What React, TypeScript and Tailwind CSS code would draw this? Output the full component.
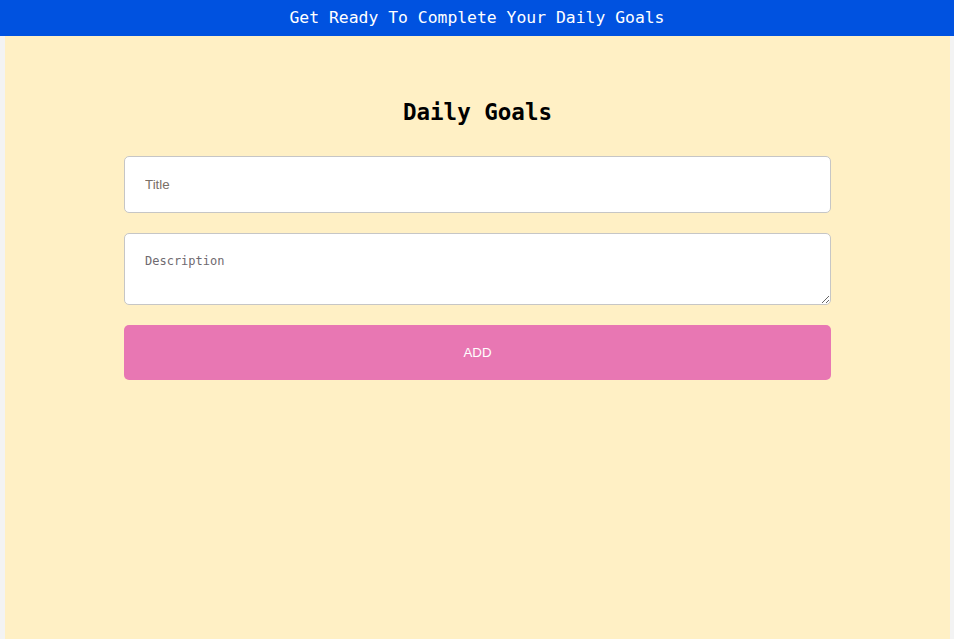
export default function App() {
  return (
    <div className="flex min-h-[639px] flex-col bg-[#f3f3f3]">
      <header className="flex h-[36px] items-center justify-center bg-[#0052e0] text-[16.4px] text-white [font-family:'DejaVu_Sans_Mono',monospace]">
        Get Ready To Complete Your Daily Goals
      </header>

      <main className="ml-[5px] mr-[4px] flex flex-1 flex-col items-center bg-[#fff0c5] pt-[61px]">
        <h1 className="text-[22.5px] font-bold leading-[30px] text-black [font-family:'DejaVu_Sans_Mono',monospace]">
          Daily Goals
        </h1>

        <form className="mt-[29px] flex w-[707px] flex-col gap-[20px]" onSubmit={(e) => e.preventDefault()}>
          <input
            type="text"
            placeholder="Title"
            className="h-[57px] rounded-[5px] border border-[#c6c6c6] bg-white px-[20px] text-[13.33px] text-black outline-none placeholder:text-[#7a6f66] [font-family:'Liberation_Sans',Arial,sans-serif]"
          />
          <textarea
            placeholder="Description"
            className="h-[72px] rounded-[5px] border border-[#c6c6c6] bg-white px-[20px] pt-[19px] text-[12px] leading-[16px] text-black outline-none placeholder:text-[#6f6a70] [font-family:'DejaVu_Sans_Mono',monospace]"
          />
          <button
            type="submit"
            className="h-[55px] rounded-[5px] bg-[#e877b3] text-[13.33px] text-white [font-family:'Liberation_Sans',Arial,sans-serif]"
          >
            ADD
          </button>
        </form>
      </main>
    </div>
  );
}
